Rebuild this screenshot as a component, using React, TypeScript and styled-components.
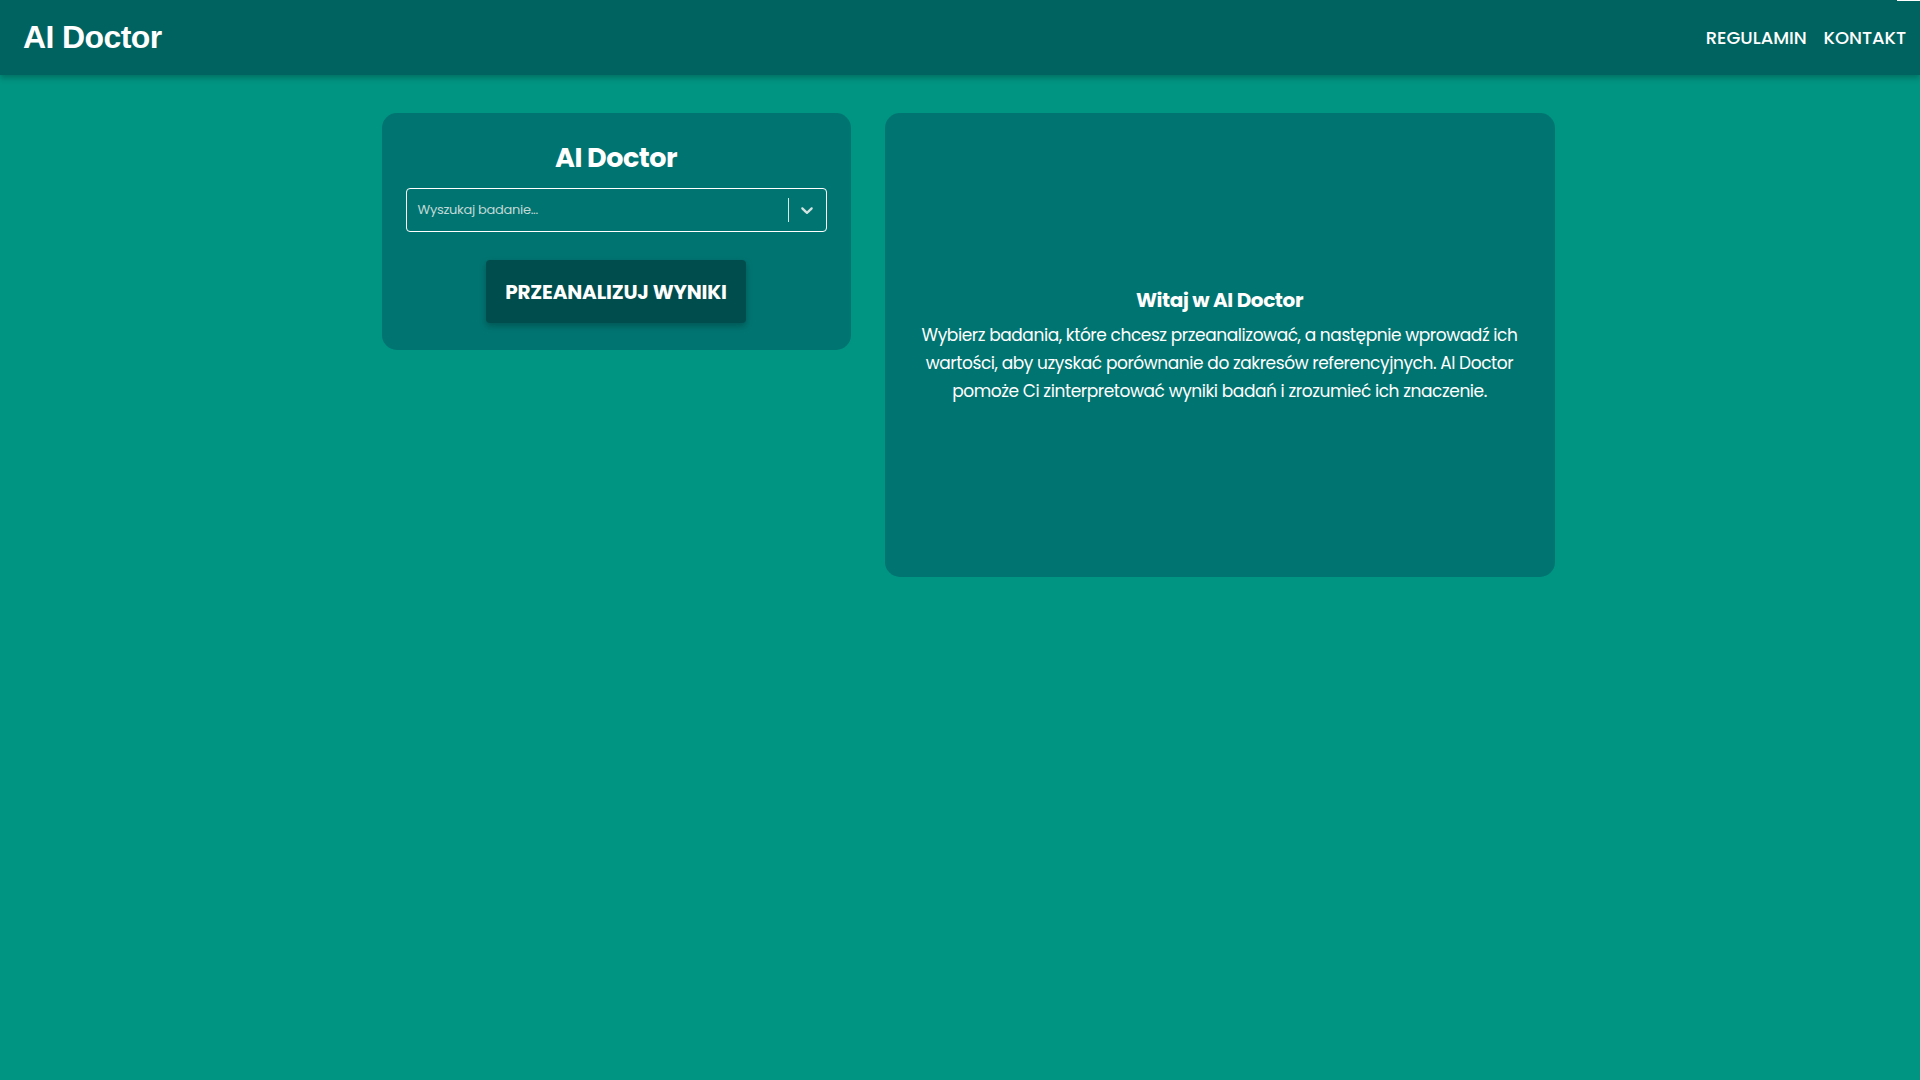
import React from "react";
import styled, { createGlobalStyle } from "styled-components";

const GlobalStyle = createGlobalStyle`
  html, body {
    margin: 0;
    padding: 0;
    background: #009582;
    font-family: "Poppins", "Lato", "Noto Sans", sans-serif;
    color: #ffffff;
  }
  * { box-sizing: border-box; }
`;

const Page = styled.div`
  min-height: 100vh;
  background: #009582;
`;

const Header = styled.header`
  height: 75px;
  background: #006360;
  box-shadow: 0 3px 6px rgba(0, 0, 0, 0.25);
  display: flex;
  align-items: center;
  justify-content: space-between;
  padding: 0 14px 0 23px;
  position: relative;
  z-index: 1;

  &::after {
    content: "";
    position: absolute;
    top: 0;
    right: 0;
    width: 23px;
    height: 1px;
    background: #ffffff;
  }
`;

const Brand = styled.div`
  font-family: "Liberation Sans", Arial, sans-serif;
  font-weight: 700;
  font-size: 32px;
  letter-spacing: -0.6px;
  color: #ffffff;
`;

const Nav = styled.nav`
  display: flex;
  gap: 17px;
`;

const NavLink = styled.a`
  font-family: "Poppins", "Lato", sans-serif;
  font-weight: 500;
  font-size: 18px;
  color: #ffffff;
  text-decoration: none;
  letter-spacing: -0.05px;
`;

const Main = styled.main`
  display: flex;
  justify-content: center;
  align-items: flex-start;
  gap: 34px;
  padding: 38px 0 0 16px;
`;

const Card = styled.section<{ $width: number; $height: number }>`
  width: ${(p) => p.$width}px;
  height: ${(p) => p.$height}px;
  background: #007471;
  border-radius: 15px;
`;

const SearchCard = styled(Card)`
  padding: 27px 24px 26px;
  display: flex;
  flex-direction: column;
  align-items: center;
`;

const CardTitle = styled.h2`
  margin: 0;
  font-size: 27px;
  font-weight: 700;
  line-height: 36px;
  letter-spacing: -0.5px;
  color: #ffffff;
  text-align: center;
`;

const Select = styled.div`
  margin-top: 12px;
  width: 100%;
  height: 44px;
  border: 1px solid #ffffff;
  border-radius: 4px;
  display: flex;
  align-items: center;
`;

const Placeholder = styled.span`
  flex: 1;
  padding-left: 11px;
  font-size: 13px;
  letter-spacing: -0.3px;
  color: #c0d9d6;
`;

const Separator = styled.span`
  width: 1px;
  height: 24px;
  background: #d9e9e8;
`;

const Indicator = styled.span`
  width: 37px;
  display: flex;
  justify-content: center;
  align-items: center;
`;

const AnalyzeButton = styled.button`
  margin-top: 28px;
  width: 260px;
  height: 63px;
  background: #004d4d;
  color: #ffffff;
  border: none;
  border-radius: 4px;
  font-family: "Poppins", "Lato", "Noto Sans", sans-serif;
  font-weight: 700;
  font-size: 20px;
  letter-spacing: -0.2px;
  box-shadow: 0 3px 6px rgba(0, 0, 0, 0.25);
  cursor: pointer;
`;

const WelcomeCard = styled(Card)`
  display: flex;
  flex-direction: column;
  align-items: center;
  justify-content: center;
  padding: 0 28px;
  text-align: center;
`;

const WelcomeTitle = styled.h3`
  margin: 0 0 7px;
  font-size: 20px;
  font-weight: 700;
  line-height: 28px;
  letter-spacing: -0.4px;
`;

const WelcomeText = styled.p`
  margin: 0;
  font-size: 17px;
  line-height: 28px;
  letter-spacing: -0.42px;
  color: #ffffff;
`;

export default function App() {
  return (
    <Page>
      <GlobalStyle />
      <Header>
        <Brand>AI Doctor</Brand>
        <Nav>
          <NavLink href="#">REGULAMIN</NavLink>
          <NavLink href="#">KONTAKT</NavLink>
        </Nav>
      </Header>
      <Main>
        <SearchCard $width={469} $height={237}>
          <CardTitle>AI Doctor</CardTitle>
          <Select>
            <Placeholder>Wyszukaj badanie...</Placeholder>
            <Separator />
            <Indicator>
              <svg width="20" height="20" viewBox="0 0 20 20" fill="#d2e3e2">
                <path d="M4.516 7.548c0.436-0.446 1.043-0.481 1.576 0l3.908 3.747 3.908-3.747c0.533-0.481 1.141-0.446 1.574 0 0.436 0.445 0.408 1.197 0 1.615-0.406 0.418-4.695 4.502-4.695 4.502-0.217 0.223-0.502 0.335-0.787 0.335s-0.57-0.112-0.789-0.335c0 0-4.287-4.084-4.695-4.502s-0.436-1.170 0-1.615z" />
              </svg>
            </Indicator>
          </Select>
          <AnalyzeButton>PRZEANALIZUJ WYNIKI</AnalyzeButton>
        </SearchCard>
        <WelcomeCard $width={670} $height={464}>
          <WelcomeTitle>Witaj w AI Doctor</WelcomeTitle>
          <WelcomeText>
            Wybierz badania, które chcesz przeanalizować, a następnie wprowadź ich wartości, aby
            uzyskać porównanie do zakresów referencyjnych. AI Doctor pomoże Ci zinterpretować
            wyniki badań i zrozumieć ich znaczenie.
          </WelcomeText>
        </WelcomeCard>
      </Main>
    </Page>
  );
}
